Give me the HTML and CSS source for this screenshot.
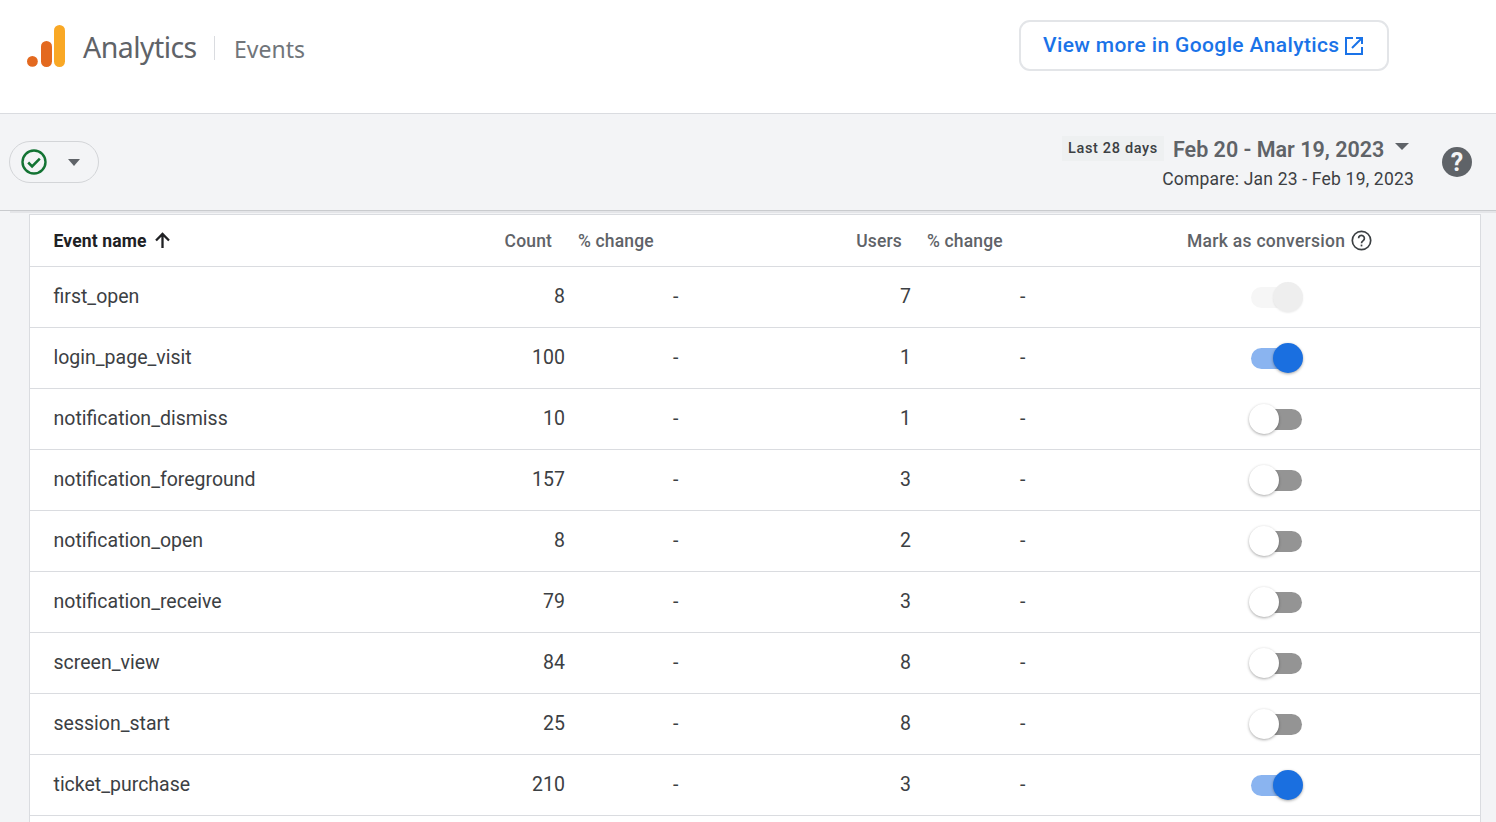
FILE: index.html
```html
<!DOCTYPE html>
<html lang="en">
<head>
<meta charset="utf-8">
<title>Analytics Events</title>
<link rel="stylesheet" href="styles.css">
</head>
<body>
<header class="topbar">
  <div class="brand">
    <svg class="logo" width="40" height="44" viewBox="0 0 40 44">
      <rect x="28" y="0" width="11" height="42" rx="5.5" fill="#f9a825"/>
      <rect x="15" y="16" width="11" height="26" rx="5.5" fill="#e3691f"/>
      <circle cx="6.4" cy="36.4" r="5.4" fill="#e3691f"/>
    </svg>
    <span class="brand-name">Analytics</span>
    <span class="brand-divider"></span>
    <span class="brand-page">Events</span>
  </div>
  <a class="ga-link">
    <span>View more in Google Analytics</span>
    <svg width="20" height="20" viewBox="0 0 20 20" fill="none" stroke="#1a73e8" stroke-width="2">
      <path d="M9 2H2v16h16v-7"/>
      <path d="M12 2h6v6M18 2L8 12"/>
    </svg>
  </a>
</header>

<section class="toolbar">
  <div class="status-pill">
    <svg width="26" height="26" viewBox="0 0 26 26" fill="none">
      <circle cx="13" cy="13" r="11.500" stroke="#137333" stroke-width="2.400"/>
      <path d="M7.200 13.500l3.900 3.900 7.700-7.700" stroke="#137333" stroke-width="2.600"/>
    </svg>
    <span class="caret caret-pill"></span>
  </div>
  <div class="dates">
    <div class="date-main">
      <span class="date-chip">Last 28 days</span>
      <span class="date-range">Feb 20 - Mar 19, 2023</span>
      <span class="caret caret-date"></span>
    </div>
    <div class="date-compare">Compare: Jan 23 - Feb 19, 2023</div>
  </div>
  <svg class="help" width="30" height="30" viewBox="0 0 30 30">
    <circle cx="15" cy="15" r="15" fill="#5f6368"/>
    <text class="help-mark" x="15" y="23.500" text-anchor="middle">?</text>
  </svg>
</section>

<main class="content">
  <div class="card">
    <div class="row head">
      <div class="name sort">Event name
        <svg width="17" height="17" viewBox="0 0 17 17" fill="none" stroke="#202124" stroke-width="2.300"><path d="M8.500 16V2M2 8.500L8.500 2 15 8.500"/></svg>
      </div>
      <div class="num">Count</div>
      <div class="chg">% change</div>
      <div class="num">Users</div>
      <div class="chg">% change</div>
      <div class="conv">Mark as conversion
        <svg width="21" height="21" viewBox="0 0 21 21" fill="none" stroke="#3c4043" stroke-width="1.700"><circle cx="10.500" cy="10.500" r="9.200"/><path d="M7.600 8.300a2.900 2.900 0 1 1 4.600 2.300c-1.100.8-1.700 1.300-1.700 2.600"/><path d="M10.500 14.600v1.800"/></svg>
      </div>
    </div>
    <div class="row"><div class="name">first_open</div><div class="num">8</div><div class="chg">-</div><div class="num">7</div><div class="chg">-</div><div class="conv"><span class="toggle is-disabled"><i></i></span></div></div>
    <div class="row"><div class="name">login_page_visit</div><div class="num">100</div><div class="chg">-</div><div class="num">1</div><div class="chg">-</div><div class="conv"><span class="toggle is-on"><i></i></span></div></div>
    <div class="row"><div class="name">notification_dismiss</div><div class="num">10</div><div class="chg">-</div><div class="num">1</div><div class="chg">-</div><div class="conv"><span class="toggle"><i></i></span></div></div>
    <div class="row"><div class="name">notification_foreground</div><div class="num">157</div><div class="chg">-</div><div class="num">3</div><div class="chg">-</div><div class="conv"><span class="toggle"><i></i></span></div></div>
    <div class="row"><div class="name">notification_open</div><div class="num">8</div><div class="chg">-</div><div class="num">2</div><div class="chg">-</div><div class="conv"><span class="toggle"><i></i></span></div></div>
    <div class="row"><div class="name">notification_receive</div><div class="num">79</div><div class="chg">-</div><div class="num">3</div><div class="chg">-</div><div class="conv"><span class="toggle"><i></i></span></div></div>
    <div class="row"><div class="name">screen_view</div><div class="num">84</div><div class="chg">-</div><div class="num">8</div><div class="chg">-</div><div class="conv"><span class="toggle"><i></i></span></div></div>
    <div class="row"><div class="name">session_start</div><div class="num">25</div><div class="chg">-</div><div class="num">8</div><div class="chg">-</div><div class="conv"><span class="toggle"><i></i></span></div></div>
    <div class="row"><div class="name">ticket_purchase</div><div class="num">210</div><div class="chg">-</div><div class="num">3</div><div class="chg">-</div><div class="conv"><span class="toggle is-on"><i></i></span></div></div>
  </div>
</main>
</body>
</html>
```
FILE: styles.css
```css
* { box-sizing: border-box; }
html, body { margin: 0; height: 100%; overflow: hidden; }
body { background: #f3f4f6; font-family: Roboto, "Liberation Sans", sans-serif; color: #3c4043; }

.topbar { height: 114px; background: #fff; border-bottom: 1px solid #dadce0; display: flex; justify-content: space-between; padding: 20px 107px 0 26px; }
.brand { display: flex; align-items: center; height: 56px; }
.logo { margin-right: 17px; margin-top: -2px; }
.brand-name { font-family: "Noto Sans", Roboto, sans-serif; font-size: 28.500px; letter-spacing: -0.55px; color: #5f6368; width: 131px; margin-top: -2px; }
.brand-divider { width: 1px; height: 24px; background: #dadce0; margin-top: -1px; }
.brand-page { font-family: "Noto Sans", Roboto, sans-serif; font-size: 23px; color: #70757a; margin-left: 19px; margin-top: 1px; }

.ga-link { width: 370px; height: 51px; border: 2px solid #e3e5e8; border-radius: 11px; display: flex; align-items: center; padding-left: 22px; gap: 4px; color: #1a73e8; font-size: 21px; font-weight: 500; letter-spacing: .38px; }
.ga-link span { margin-top: -2px; }

.toolbar { height: 97px; position: relative; display: flex; align-items: flex-start; justify-content: space-between; padding: 22px 24px 0 9px; border-bottom: 1px solid #c9cbce; }
.toolbar::after { content: ""; position: absolute; left: 10px; right: 0; bottom: -3px; height: 2px; background: #e4e5e8; }
.status-pill { width: 90px; height: 42px; margin-top: 5px; border: 1px solid #d3d5d8; border-radius: 21px; display: flex; align-items: center; padding-left: 11px; }
.caret { width: 0; height: 0; border-left: 7px solid transparent; border-right: 7px solid transparent; border-top: 7px solid #5f6368; display: block; }
.caret-pill { margin-left: 20.500px; margin-top: 1px; border-left-width: 6.500px; border-right-width: 6.500px; }
.dates { margin-left: auto; width: 352px; display: flex; flex-direction: column; align-items: flex-end; }
.date-main { display: flex; align-items: center; height: 25px; align-self: flex-start; }
.date-chip { background: #eef0f1; height: 25px; width: 102px; text-align: center; line-height: 25px; font-size: 14.500px; font-weight: 500; letter-spacing: .65px; color: #3c4043; }
.date-range { font-size: 21.500px; font-weight: 600; color: #5f6368; margin-left: 9px; margin-top: 1px; letter-spacing: 0; }
.caret-date { margin-left: 11px; margin-top: -5px; }
.date-compare { font-size: 17.500px; color: #3c4043; margin-top: 6px; line-height: 24px; letter-spacing: .2px; }
.help { margin-left: 28px; margin-top: 11px; flex: none; }
.help-mark { font-family: Roboto, sans-serif; font-size: 25px; font-weight: 700; fill: #f3f4f6; }

.content { padding: 3px 15px 0 29px; }
.card { background: #fff; border: 1px solid #dadce0; padding-bottom: 40px; }
.row { display: grid; grid-template-columns: 450px 85px 125px 221px 129px 1fr; align-items: center; height: 61px; border-bottom: 1px solid #dadce0; font-size: 19.500px; color: #3c4043; }
.row.head { height: 52px; font-size: 17.500px; font-weight: 500; color: #5f6368; letter-spacing: .15px; }
.name { padding-left: 23.500px; }
.row:not(.head) .name, .row:not(.head) .num, .row:not(.head) .chg { padding-bottom: 2px; }
.num { text-align: right; }
.chg { padding-left: 108px; }
.row:not(.head) .chg:nth-child(5) { padding-left: 109px; }
.head .name { color: #202124; font-weight: 700; }
.sort { display: flex; align-items: center; gap: 7px; }
.head .num { padding-right: 13px; }
.head .num:nth-child(4) { padding-right: 9px; }
.head .chg { padding-left: 13px; white-space: nowrap; }
.head .chg:nth-child(5) { padding-left: 16px; }
.conv { padding-left: 211px; }
.head .conv { padding-left: 147px; display: flex; align-items: center; gap: 6px; white-space: nowrap; letter-spacing: .28px; }

.toggle { display: block; position: relative; width: 51px; height: 21px; border-radius: 11px; background: #949494; }
.toggle i { position: absolute; top: -4.500px; left: -2px; width: 30px; height: 30px; border-radius: 50%; background: #fff; box-shadow: 0 1px 3px rgba(0,0,0,.35); }
.toggle.is-on { background: #8ab4f0; }
.toggle.is-on i { left: 22px; background: #1a6fe0; }
.toggle.is-disabled { background: #f6f6f6; }
.toggle.is-disabled i { left: 22px; background: #eeeeee; box-shadow: 0 1px 2px rgba(0,0,0,.08); }
```
